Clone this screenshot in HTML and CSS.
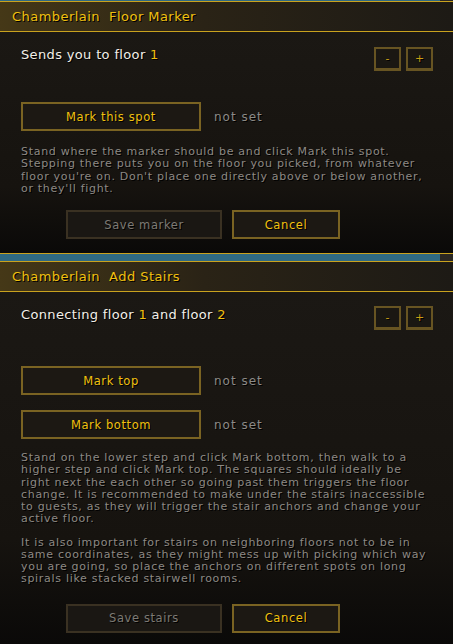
FILE: index.html
```html
<!DOCTYPE html>
<html lang="en">
<head>
    <meta charset="UTF-8">
    <meta name="viewport" content="width=device-width, initial-scale=1.0">
    <title>Chamberlain</title>
    <link rel="stylesheet" href="styles.css">
</head>
<body>
    <div class="panel panel-marker">
        <div class="cap"><span class="cap-fill"></span><span class="cap-end"></span></div>
        <div class="titlebar">Chamberlain&nbsp; Floor Marker</div>
        <div class="content">
            <div class="floor-row">
                <span class="floor-text">Sends you to floor <em>1</em></span>
                <div class="steppers">
                    <button class="step">-</button>
                    <button class="step">+</button>
                </div>
            </div>

            <div class="mark-row first">
                <button class="btn mark">Mark this spot</button>
                <span class="status">not set</span>
            </div>

            <p class="help">Stand where the marker should be and click Mark this spot. Stepping there puts you on the floor you picked, from whatever floor you're on. Don't place one directly above or below another, or they'll fight.</p>

            <div class="actions">
                <button class="btn save" disabled>Save marker</button>
                <button class="btn cancel">Cancel</button>
            </div>
        </div>
    </div>

    <div class="panel panel-stairs">
        <div class="cap"><span class="cap-fill"></span><span class="cap-end"></span></div>
        <div class="titlebar">Chamberlain&nbsp; Add Stairs</div>
        <div class="content">
            <div class="floor-row">
                <span class="floor-text">Connecting floor <em>1</em> and floor <em>2</em></span>
                <div class="steppers">
                    <button class="step">-</button>
                    <button class="step">+</button>
                </div>
            </div>

            <div class="mark-row first">
                <button class="btn mark">Mark top</button>
                <span class="status">not set</span>
            </div>
            <div class="mark-row">
                <button class="btn mark">Mark bottom</button>
                <span class="status">not set</span>
            </div>

            <p class="help">Stand on the lower step and click Mark bottom, then walk to a higher step and click Mark top. The squares should ideally be right next the each other so going past them triggers the floor change. It is recommended to make under the stairs inaccessible to guests, as they will trigger the stair anchors and change your active floor.</p>
            <p class="help">It is also important for stairs on neighboring floors not to be in same coordinates, as they might mess up with picking which way you are going, so place the anchors on different spots on long spirals like stacked stairwell rooms.</p>

            <div class="actions">
                <button class="btn save" disabled>Save stairs</button>
                <button class="btn cancel">Cancel</button>
            </div>
        </div>
    </div>
</body>
</html>
```

FILE: styles.css
```css
body {
    margin: 0;
    background: #080807;
    font-family: 'DejaVu Sans', sans-serif;
    color: #e8e4dc;
    overflow: hidden;
}

.panel {
    display: flex;
    flex-direction: column;
    border-top: 1px solid #c9a21e;
}
/* first panel is scrolled up so only the end of its cap shows */
.panel-marker {
    margin-top: -7px;
    height: 259px;
}
.panel-stairs {
    height: 392px;
}

.cap {
    display: flex;
    height: 7px;
    border-bottom: 1px solid #c9a21e;
}
.cap-fill {
    flex: 1;
    background: #2f6a83;
}
.cap-end {
    width: 13px;
    background: #2a2723;
}

.titlebar {
    height: 29px;
    line-height: 29px;
    padding-left: 12px;
    border-bottom: 1px solid #c9a21e;
    background: linear-gradient(to right, #453817, #2a2316 45%, #1d1a15);
    color: #f0c010;
    font-size: 13px;
    letter-spacing: 0.45px;
    text-shadow: 1px 1px 0 #000;
}

.content {
    flex: 1;
    padding: 15px 20px 0 21px;
    background: linear-gradient(to bottom, #1b1814, #16130f 70%, #0a0908);
}
.panel-stairs .content {
    padding-top: 14px;
}

.floor-row {
    display: flex;
    justify-content: space-between;
    align-items: flex-start;
}
.floor-text {
    font-size: 13px;
    line-height: 16px;
    letter-spacing: 0.35px;
    color: #f2efe8;
    text-shadow: 1px 1px 0 #000;
}
.panel-stairs .floor-text {
    padding-top: 1px;
}
.floor-text em {
    font-style: normal;
    color: #f0c010;
}

.steppers {
    display: flex;
    gap: 5px;
}
.step {
    width: 27px;
    height: 24px;
    padding: 0;
    background: #1a1712;
    border: 2px solid #675422;
    border-bottom-width: 3px;
    color: #c9a014;
    font-family: inherit;
    font-size: 11px;
    text-shadow: 1px 1px 0 #000;
}

.btn {
    height: 29px;
    padding: 0;
    background: #1c1813;
    border: 2px solid #7a6322;
    color: #f0c010;
    font-family: inherit;
    font-size: 11.5px;
    letter-spacing: 0.6px;
    text-shadow: 1px 1px 0 #000;
}
.btn.save {
    background: #1a1713;
    border-color: #3a3122;
    color: #7d7a74;
}

.mark-row {
    display: flex;
    align-items: center;
    gap: 13px;
    margin-top: 15px;
}
.mark-row.first {
    margin-top: 31px;
}
.panel-stairs .mark-row.first {
    margin-top: 36px;
}
.mark {
    width: 180px;
}
.status {
    font-size: 12px;
    letter-spacing: 1px;
    color: #8c8a87;
    text-shadow: 1px 1px 0 #000;
}

.help {
    margin: 15px 0 0;
    font-size: 11px;
    line-height: 12.25px;
    letter-spacing: 0.7px;
    color: #8d8984;
    text-shadow: 1px 1px 0 #000;
}
.panel-stairs .help {
    margin-top: 13px;
}
.panel-stairs .help + .help {
    margin-top: 11px;
}

.actions {
    display: flex;
    gap: 10px;
    margin: 15px 0 0 45px;
}
.panel-stairs .actions {
    margin-top: 18px;
}
.save {
    width: 156px;
}
.cancel {
    width: 108px;
}
```
